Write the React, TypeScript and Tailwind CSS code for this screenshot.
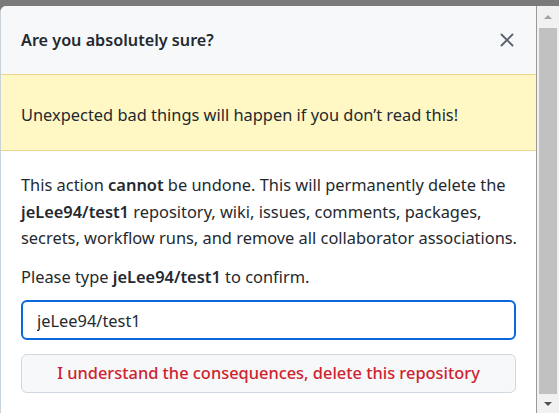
import { X } from 'lucide-react'

const repo = 'jeLee94/test1'

const Scrollbar: React.FC = () => (
  <div className="flex w-[23px] flex-col border-l border-[#9a9a9a] bg-[#f1f1f1]">
    <div className="flex h-[22px] items-center justify-center">
      <div className="h-0 w-0 border-x-[4px] border-b-[4px] border-x-transparent border-b-[#a3a3a3]" />
    </div>
    <div className="mx-[2px] flex-1 bg-[#c1c1c1]" />
    <div className="flex h-[19px] items-center justify-center">
      <div className="h-0 w-0 border-x-[4px] border-t-[4px] border-x-transparent border-t-[#505050]" />
    </div>
  </div>
)

const App: React.FC = () => {
  return (
    <div
      className="flex h-[413px] w-[559px] flex-col overflow-hidden bg-[#7a7a7a] pt-[6px] text-[#24292f]"
      style={{ fontFamily: '"Noto Sans", "Open Sans", sans-serif' }}
    >
      <div className="flex min-h-0 flex-1">
        <div className="flex w-[536px] flex-col rounded-tl-[6px] border-l border-[#c9d1d9] bg-white">
          <div className="flex h-[68px] items-center justify-between rounded-tl-[6px] bg-[#f6f8fa] pl-[20px] pr-[18px]">
            <h1 className="text-[16.2px] font-semibold">Are you absolutely sure?</h1>
            <X className="h-[22px] w-[22px] text-[#57606a]" strokeWidth={2} />
          </div>
          <div className="flex h-[77px] items-center border-y border-[#ecd58f] bg-[#fff8c5] pl-[20px] pt-[5px] text-[16.4px]">
            Unexpected bad things will happen if you don’t read this!
          </div>
          <div className="px-[20px] pt-[21px]">
            <p className="whitespace-nowrap text-[16.4px] leading-[26.5px]">
              This action <b className="font-semibold">cannot</b> be undone. This will permanently
              delete the
              <br />
              <b className="font-semibold">{repo}</b> repository, wiki, issues, comments, packages,
              <br />
              secrets, workflow runs, and remove all collaborator associations.
            </p>
            <p className="mt-[12px] text-[16.4px] leading-[26.5px]">
              Please type <b className="font-semibold">{repo}</b> to confirm.
            </p>
            <input
              className="mt-[10px] h-[40px] w-full rounded-[6px] border-2 border-[#0969da] px-[14px] text-[16.4px] text-[#24292f] outline-none"
              defaultValue={repo}
            />
            <button className="mt-[14px] h-[39px] w-full rounded-[6px] border border-[#d0d7de] bg-[#f6f8fa] text-[16.4px] font-medium text-[#cf222e]">
              I understand the consequences, delete this repository
            </button>
          </div>
        </div>
        <Scrollbar />
      </div>
    </div>
  )
}

export default App
